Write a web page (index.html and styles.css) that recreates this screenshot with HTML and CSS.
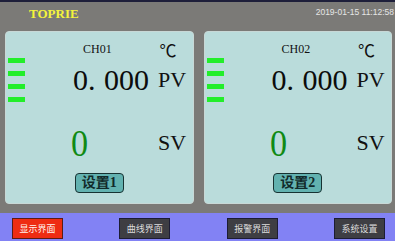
FILE: index.html
```html
<!DOCTYPE html>
<html lang="zh">
<head>
  <meta charset="UTF-8" />
  <meta name="viewport" content="width=device-width, initial-scale=1.0"/>
  <title>TOPRIE</title>
  <link rel="stylesheet" href="styles.css">
</head>
<body>
  <div class="topbar">
    <span class="brand">TOPRIE</span>
    <span class="clock">2019-01-15 11:12:58</span>
  </div>

  <div class="main">
    <div class="panel">
      <div class="head">
        <span class="ch">CH01</span>
        <span class="deg">℃</span>
      </div>
      <div class="pv">
        <div class="bars"><i></i><i></i><i></i><i></i></div>
        <div class="reading">
          <span class="value">0. 000</span>
          <span class="unit">PV</span>
        </div>
      </div>
      <div class="sv">
        <span class="setv">0</span>
        <span class="unit">SV</span>
      </div>
      <button class="set-btn">设置1</button>
    </div>

    <div class="panel">
      <div class="head">
        <span class="ch">CH02</span>
        <span class="deg">℃</span>
      </div>
      <div class="pv">
        <div class="bars"><i></i><i></i><i></i><i></i></div>
        <div class="reading">
          <span class="value">0. 000</span>
          <span class="unit">PV</span>
        </div>
      </div>
      <div class="sv">
        <span class="setv">0</span>
        <span class="unit">SV</span>
      </div>
      <button class="set-btn">设置2</button>
    </div>
  </div>

  <div class="navbar">
    <button class="nav-btn active">显示界面</button>
    <button class="nav-btn">曲线界面</button>
    <button class="nav-btn">报警界面</button>
    <button class="nav-btn">系统设置</button>
  </div>
</body>
</html>
```

FILE: styles.css
```css
body {
  margin: 0;
  width: 395px;
  height: 241px;
  overflow: hidden;
  background: #7b7a77;
  font-family: "Liberation Serif", "Noto Sans CJK SC", serif;
}
.topbar {
  height: 27px;
  border-top: 2px solid #1e1f3a;
  display: flex;
  justify-content: space-between;
  align-items: flex-start;
  padding-left: 29px;
}
.brand {
  margin-top: 4px;
  font-size: 13px;
  font-weight: bold;
  line-height: 16px;
  color: #f4f43c;
}
.clock {
  margin-top: 5px;
  font-family: "Liberation Sans", sans-serif;
  font-size: 8.5px;
  line-height: 10px;
  color: #e6e6e6;
  white-space: nowrap;
  margin-right: 1px;
}
.main {
  display: flex;
  gap: 10px;
  padding: 2px 3px 0 5px;
}
.panel {
  flex: 1;
  height: 171px;
  background: #badcdb;
  border: 1px solid #c8d8d6;
  border-radius: 4px;
  display: flex;
  flex-direction: column;
}
.head {
  height: 16px;
  margin-top: 9px;
  padding: 0 16px 0 77px;
  display: flex;
  justify-content: space-between;
  align-items: center;
}
.ch {
  font-size: 12px;
  color: #111;
}
.deg {
  font-size: 17px;
  color: #111;
}
.pv {
  display: flex;
  align-items: flex-start;
  margin-top: 1px;
}
.bars {
  margin-left: 2px;
  width: 17px;
  display: flex;
  flex-direction: column;
  gap: 8px;
}
.bars i {
  display: block;
  height: 5px;
  background: #22ee2a;
}
.reading {
  display: flex;
  align-items: flex-start;
  margin: 7px 0 0 48px;
  gap: 9px;
  line-height: 30px;
}
.value {
  font-size: 30px;
  color: #0c0c0c;
  word-spacing: 1px;
}
.unit {
  font-size: 22px;
  color: #111;
}
.sv {
  display: flex;
  align-items: center;
  height: 40px;
  margin-top: 21px;
  padding-left: 65px;
}
.setv {
  width: 87px;
  font-size: 38px;
  line-height: 40px;
  color: #108a14;
  transform: scaleX(0.9);
  transform-origin: left center;
}
.set-btn {
  align-self: center;
  margin-top: 10px;
  width: 49px;
  height: 20px;
  padding: 0;
  background: #62b2b0;
  border: 1.5px solid #173232;
  border-radius: 4px;
  font-family: "Liberation Serif", "Noto Sans CJK SC", serif;
  font-size: 14px;
  font-weight: bold;
  line-height: 16px;
  color: #112a2a;
}
.navbar {
  margin-top: 9px;
  height: 28px;
  background: #8282f4;
  display: flex;
  justify-content: space-between;
  align-items: flex-start;
  padding: 0 10px 0 12px;
}
.nav-btn {
  margin-top: 5px;
  width: 51px;
  height: 21px;
  padding: 0;
  background: #3e3e43;
  border: 1px solid #1c1c34;
  font-family: "Noto Sans CJK SC", sans-serif;
  font-size: 9px;
  color: #dcdcdc;
}
.nav-btn.active {
  background: #ee2c12;
  border-color: #5a1c14;
  color: #fff4ee;
}
```
